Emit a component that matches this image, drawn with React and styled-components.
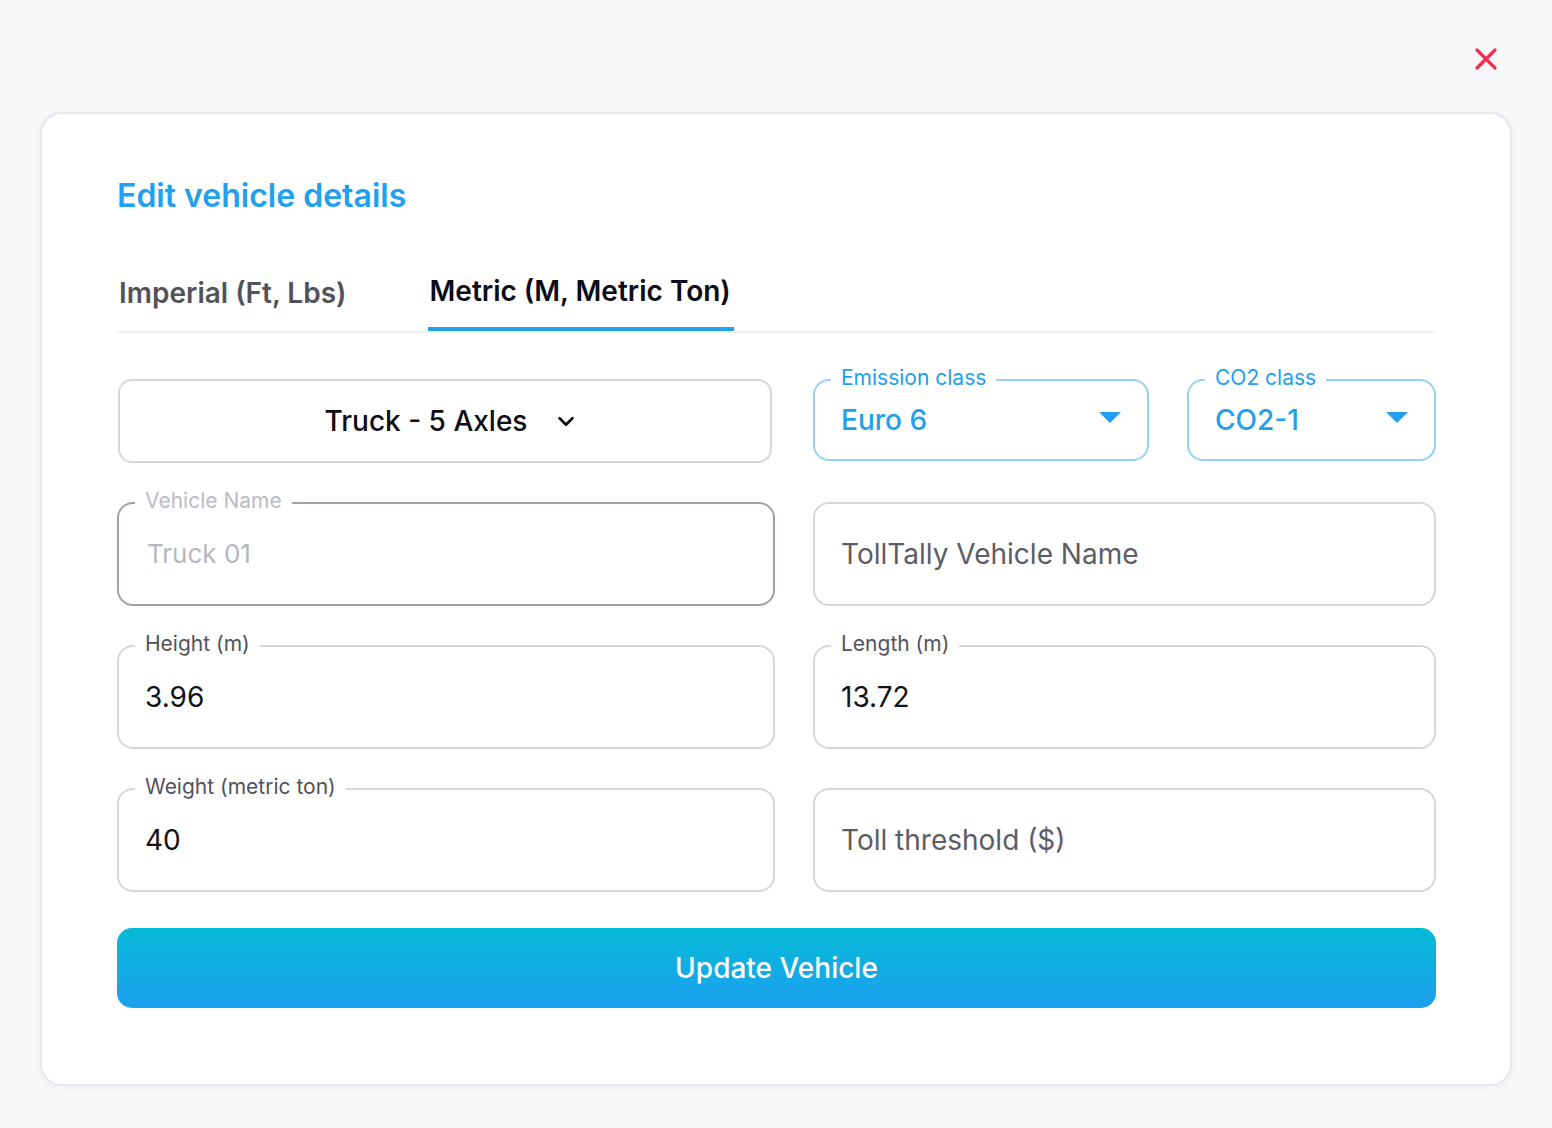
import React from 'react';
import styled, { createGlobalStyle } from 'styled-components';

const GlobalStyle = createGlobalStyle`
  html, body {
    margin: 0;
    padding: 0;
    background: #f6f7f9;
    font-family: 'Inter', 'Noto Sans', sans-serif;
  }
  * { box-sizing: border-box; }
`;

const Page = styled.div`
  width: 1552px;
  height: 1128px;
  padding: 46px 40px 0 40px;
  display: flex;
  flex-direction: column;
`;

const TopBar = styled.div`
  display: flex;
  justify-content: flex-end;
  padding-right: 13px;
  height: 66px;
`;

const CloseButton = styled.button`
  width: 26px;
  height: 26px;
  padding: 0;
  border: none;
  background: transparent;
  cursor: pointer;
  display: flex;
  align-items: center;
  justify-content: center;
`;

const Card = styled.div`
  width: 1472px;
  height: 974px;
  background: #fff;
  border: 2px solid #e4e8ee;
  border-radius: 22px;
  box-shadow: 0 2px 6px rgba(30, 40, 60, 0.04);
  padding: 60px 75px 0 75px;
`;

const Title = styled.h2`
  margin: 0;
  font-size: 32px;
  font-weight: 600;
  color: #20a0ee;
  line-height: 44px;
`;

const Tabs = styled.div`
  margin-top: 57px;
  display: flex;
  gap: 78px;
  border-bottom: 2px solid #eeeff3;
`;

const Tab = styled.button`
  border: none;
  background: transparent;
  padding: 0 3px 18px 2px;
  margin-bottom: -2px;
  font-family: inherit;
  font-size: 28px;
  font-weight: 600;
  line-height: 36px;
  color: ${(p) => (p.active ? '#0c0c18' : '#52525b')};
  border-bottom: 4px solid ${(p) => (p.active ? '#22a2ee' : 'transparent')};
  transform: translateY(${(p) => (p.active ? '-2px' : '0')});
  cursor: pointer;
`;

const Form = styled.div`
  margin-top: 46px;
  display: grid;
  grid-template-columns: 658px 1fr;
  column-gap: 38px;
  row-gap: 39px;
`;

const SelectRow = styled.div`
  display: flex;
  gap: 38px;
`;

const TruckSelect = styled.button`
  width: 654px;
  height: 84px;
  margin-left: 1px;
  border: 2px solid #d6d7dc;
  border-radius: 14px;
  background: #fff;
  display: flex;
  align-items: center;
  justify-content: center;
  gap: 28px;
  font-family: inherit;
  font-size: 28px;
  font-weight: 500;
  color: #0c0c14;
  cursor: pointer;
  padding: 0 0 0 12px;
`;

const Field = styled.div`
  position: relative;
  height: ${(p) => p.h || 104}px;
  width: ${(p) => (p.w ? `${p.w}px` : '100%')};
  border: 2px solid ${(p) => p.border || '#d6d7dc'};
  border-radius: 16px;
  background: #fff;
  display: flex;
  align-items: center;
  padding: 0 26px 0 ${(p) => p.pl || 26}px;
`;

const Legend = styled.span`
  position: absolute;
  top: -16px;
  left: 16px;
  padding: 0 10px;
  background: #fff;
  font-size: 21px;
  line-height: 26px;
  font-weight: 400;
  color: ${(p) => p.color || '#52525b'};
`;

const Value = styled.span`
  flex: 1;
  font-size: ${(p) => p.size || 28}px;
  font-weight: ${(p) => p.weight || 400};
  color: ${(p) => p.color || '#111118'};
  line-height: 34px;
`;

const Caret = styled.span`
  width: 0;
  height: 0;
  border-left: 11px solid transparent;
  border-right: 11px solid transparent;
  border-top: 11px solid #20a0ee;
  margin-top: -6px;
`;

const UpdateButton = styled.button`
  grid-column: 1 / -1;
  height: 80px;
  margin-top: -3px;
  border: none;
  border-radius: 15px;
  background: linear-gradient(180deg, #05bad6 0%, #1d9ff0 100%);
  color: #fff;
  font-family: inherit;
  font-size: 28px;
  font-weight: 500;
  cursor: pointer;
`;

const Chevron = () => (
  <svg width="22" height="22" viewBox="0 0 24 24" fill="none" stroke="#0c0c14" strokeWidth="3" strokeLinecap="round" strokeLinejoin="round">
    <path d="M5 9l7 7 7-7" />
  </svg>
);

const CloseIcon = () => (
  <svg width="26" height="26" viewBox="0 0 26 26" fill="none" stroke="#f02e4e" strokeWidth="3.2" strokeLinecap="round">
    <path d="M4 4L22 22M22 4L4 22" />
  </svg>
);

const App = () => {
  return (
    <>
      <GlobalStyle />
      <Page>
        <TopBar>
          <CloseButton aria-label="Close">
            <CloseIcon />
          </CloseButton>
        </TopBar>
        <Card>
          <Title>Edit vehicle details</Title>
          <Tabs>
            <Tab>Imperial (Ft, Lbs)</Tab>
            <Tab active>Metric (M, Metric Ton)</Tab>
          </Tabs>
          <Form>
            <TruckSelect>
              <span>Truck - 5 Axles</span>
              <Chevron />
            </TruckSelect>
            <SelectRow>
              <Field h={82} w={336} border="#96d0f5">
                <Legend color="#20a0ee">Emission class</Legend>
                <Value color="#20a0ee" weight={500}>Euro 6</Value>
                <Caret />
              </Field>
              <Field h={82} w={249} border="#96d0f5">
                <Legend color="#20a0ee">CO2 class</Legend>
                <Value color="#20a0ee" weight={500}>CO2-1</Value>
                <Caret />
              </Field>
            </SelectRow>

            <Field border="#9ea1ab" pl={28}>
              <Legend color="#b9bcc4">Vehicle Name</Legend>
              <Value color="#b5b8c0" size={26}>Truck 01</Value>
            </Field>
            <Field>
              <Value color="#5c5c68">TollTally Vehicle Name</Value>
            </Field>

            <Field>
              <Legend>Height (m)</Legend>
              <Value>3.96</Value>
            </Field>
            <Field>
              <Legend>Length (m)</Legend>
              <Value>13.72</Value>
            </Field>

            <Field>
              <Legend>Weight (metric ton)</Legend>
              <Value>40</Value>
            </Field>
            <Field>
              <Value color="#5c5c68">Toll threshold ($)</Value>
            </Field>

            <UpdateButton>Update Vehicle</UpdateButton>
          </Form>
        </Card>
      </Page>
    </>
  );
};

export default App;
